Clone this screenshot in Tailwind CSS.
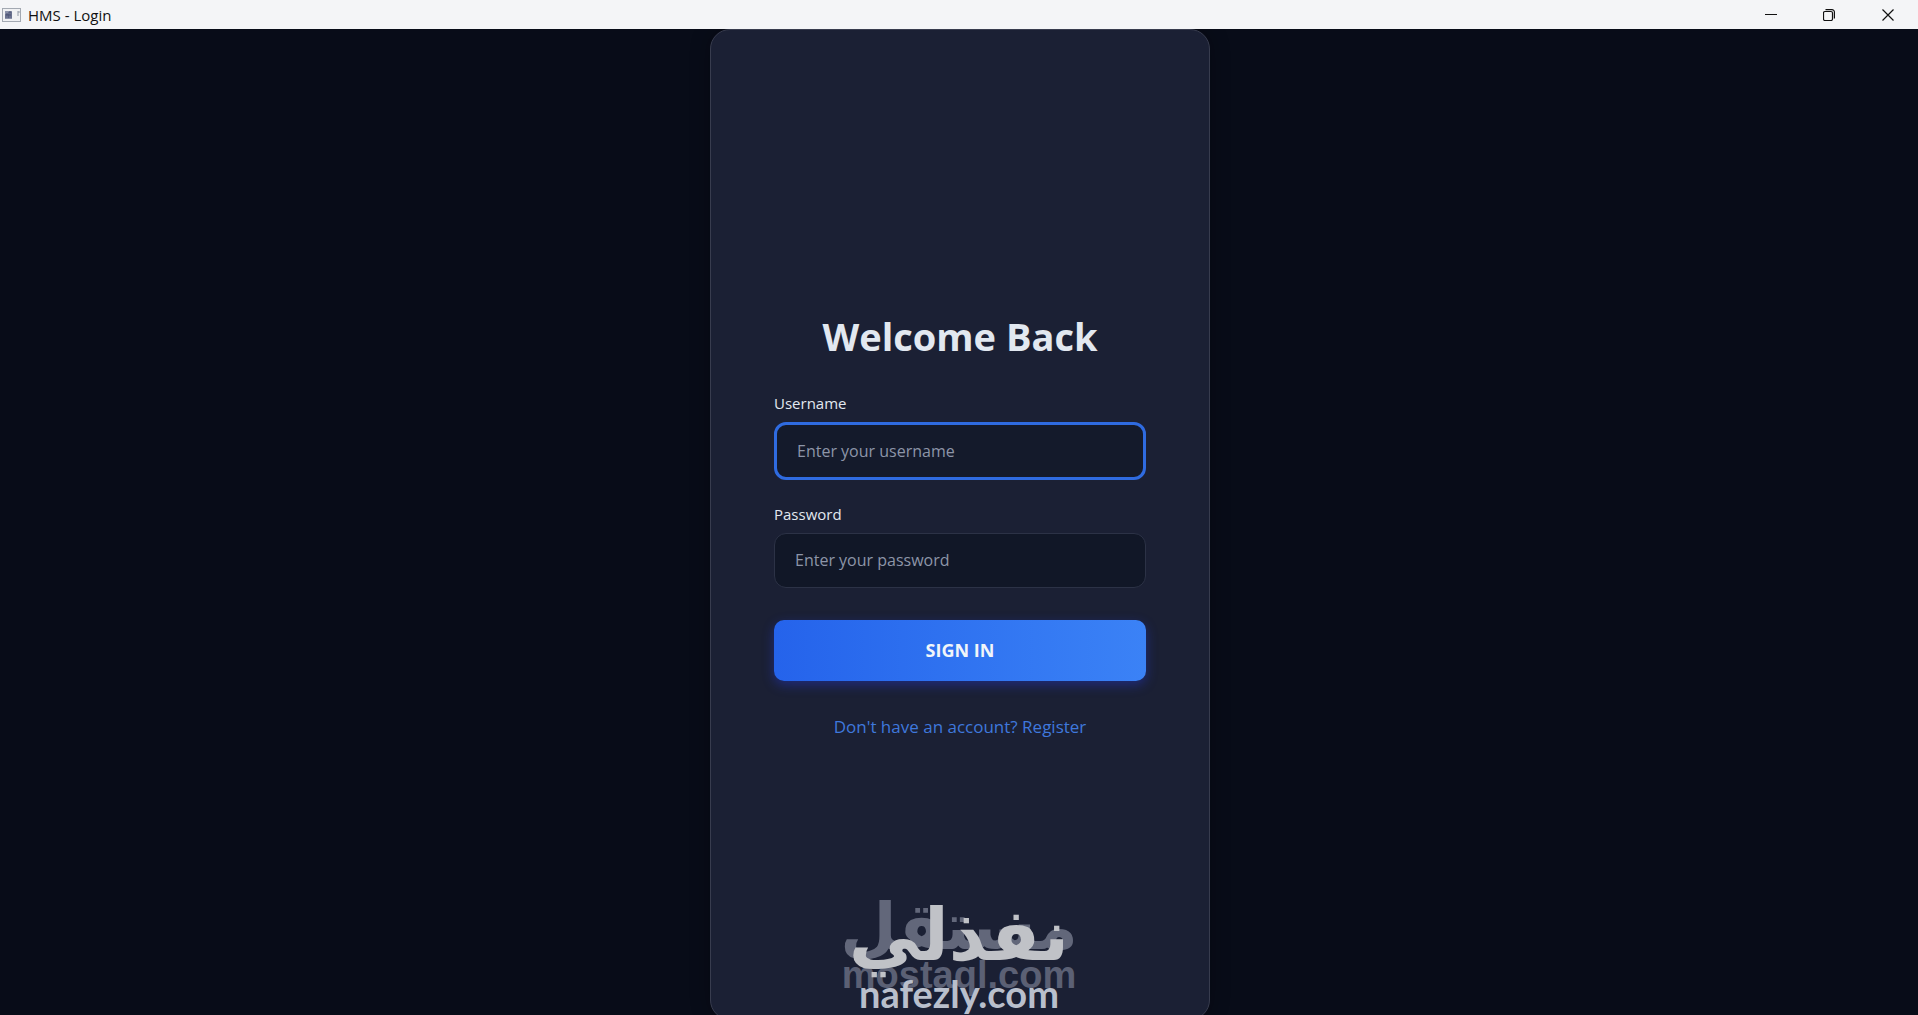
<!DOCTYPE html>
<html lang="en">
<head>
<meta charset="utf-8">
<meta name="viewport" content="width=device-width, initial-scale=1">
<title>HMS - Login</title>
<script src="https://cdn.jsdelivr.net/npm/@tailwindcss/browser@4"></script>
</head>
<body class="flex h-screen flex-col overflow-hidden bg-[#080c18] font-['Open_Sans','Noto_Sans',sans-serif] text-[#e2e8f0]">
  <!-- Window title bar -->
  <header class="relative z-10 flex h-[29px] shrink-0 items-center bg-[#f4f5f7] pl-[2px] text-[#111111]">
    <svg class="h-4 w-[19px]" viewBox="0 0 19 16" aria-hidden="true">
      <rect x="0.5" y="1.5" width="18" height="13" fill="#f0f1f3" stroke="#a3a9b2"/>
      <rect x="3" y="4" width="7" height="8" fill="#8990a8"/>
      <path d="M4 11V7h2v4M7 11V5h2v6M4 8h5" stroke="#4a5274" fill="none"/>
      <path d="M16 4v5M16 5h2" stroke="#9199a6" fill="none"/>
    </svg>
    <span class="ml-[7px] flex-1 text-[15px] leading-5">HMS - Login</span>
    <button class="flex h-full w-[58px] items-center justify-center" aria-label="Minimize">
      <svg class="size-3" viewBox="0 0 12 12"><path d="M0 5.500h12" stroke="#111"/></svg>
    </button>
    <button class="flex h-full w-[58px] items-center justify-center" aria-label="Restore">
      <svg class="size-3" viewBox="0 0 12 12" fill="none" stroke="#111"><rect x="0.500" y="2.500" width="9" height="9" rx="1.500" stroke-width="1.200"/><path d="M2.500 .6H9a2.400 2.400 0 0 1 2.400 2.400V9.500" stroke-width="1.200"/></svg>
    </button>
    <button class="flex h-full w-[60px] items-center justify-center" aria-label="Close">
      <svg class="size-3" viewBox="0 0 12 12"><path d="M.5.5l11 11M11.500.5l-11 11" stroke="#111" stroke-width="1.200"/></svg>
    </button>
  </header>

  <main class="relative flex min-h-0 flex-1 justify-center pl-0.5">
    <section class="flex h-[calc(100%+5px)] w-full max-w-[500px] flex-col justify-center rounded-[20px] border border-[#383c4e] bg-[#1b2034] px-[63px] pt-0.5 shadow-[0_0_20px_rgba(0,0,0,0.3)]">
      <h1 class="mb-8 text-center text-[38px] leading-[50px] font-bold">Welcome Back</h1>
      <form class="flex flex-col">
        <label for="username" class="mb-2 text-[15px] leading-[21px]">Username</label>
        <input id="username" type="text" placeholder="Enter your username" class="mb-6 h-[58px] rounded-xl border-3 border-[#2f6be0] bg-[#141a2b] px-5 text-base outline-none placeholder:text-[#8d95a8]">
        <label for="password" class="mb-2 text-[15px] leading-[21px]">Password</label>
        <input id="password" type="password" placeholder="Enter your password" class="mb-8 h-[55px] rounded-xl border border-[#2c3246] bg-[#111727] px-5 text-base outline-none placeholder:text-[#8d95a8]">
        <button type="submit" class="mb-8 h-[61px] rounded-[10px] bg-linear-to-r from-[#2563eb] to-[#3b82f6] text-lg font-bold text-[#f1f5f9] shadow-[0_4px_12px_rgba(37,60,235,0.4)]">SIGN IN</button>
        <a href="#register" class="text-center text-[17px] leading-7 text-[#3f78dc]">Don't have an account? Register</a>
      </form>
    </section>

    <!-- Marketplace watermarks, layered over the card -->
    <div class="pointer-events-none absolute inset-x-0 bottom-0 h-40 text-center">
      <div class="absolute inset-x-0 bottom-11 font-['DejaVu_Sans',sans-serif] text-[65px] leading-[88px] font-bold text-[#62677a]" lang="ar" dir="rtl">مستقل</div>
      <div class="absolute inset-x-0 bottom-5 font-['Liberation_Sans',sans-serif] text-[38px] leading-10 font-bold text-[#5b6074]">mostaql.com</div>
      <div class="absolute inset-x-0 bottom-9 font-['DejaVu_Sans',sans-serif] text-[72px] leading-[88px] font-bold text-[#c0c2c7]" lang="ar" dir="rtl">نفذلي</div>
      <div class="absolute inset-x-0 bottom-0.5 font-['Lato',sans-serif] text-[38px] leading-10 font-bold text-[#b9bfcc]">nafezly.com</div>
    </div>
  </main>
</body>
</html>
